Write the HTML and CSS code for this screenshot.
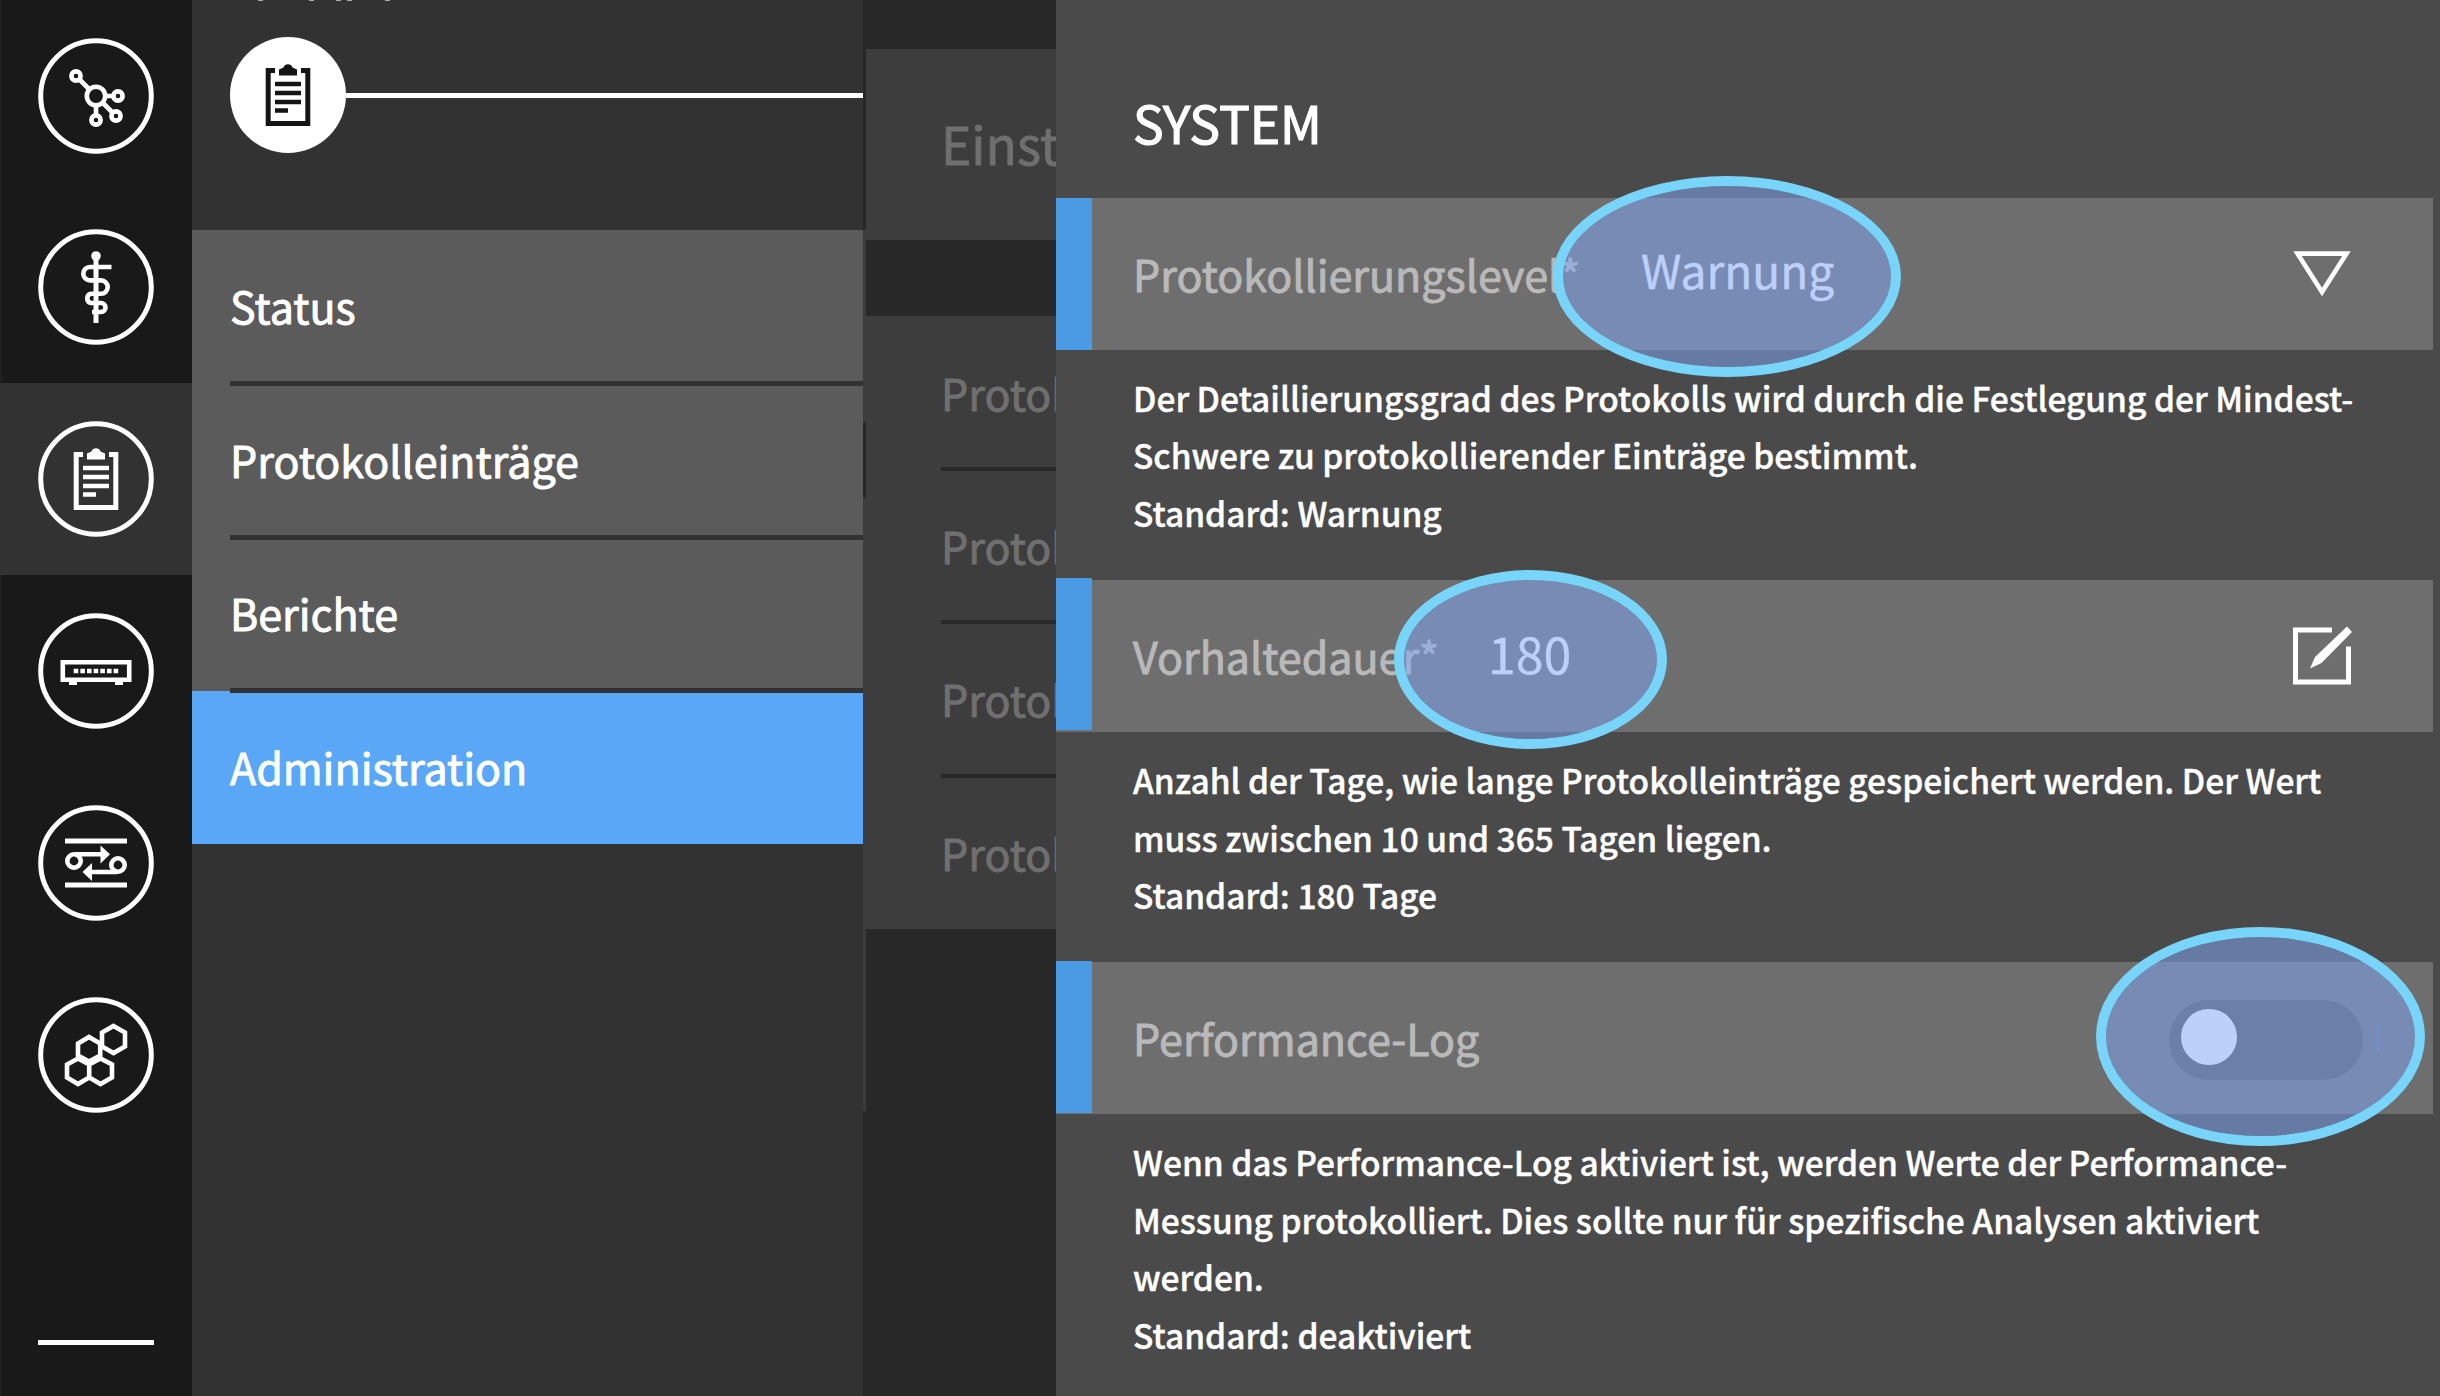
FILE: index.html
```
<!DOCTYPE html>
<html lang="de">
<head>
<meta charset="utf-8">
<title>Protokoll – Administration</title>
<link rel="stylesheet" href="styles.css">
</head>
<body>
<div class="app">
  <nav class="rail">
    <a class="rail-item">
      <svg viewBox="0 0 116 116"><circle class="ring" cx="58" cy="58" r="55.3"/>
        <g class="line"><circle cx="58" cy="58" r="9.2"/><circle cx="38" cy="38" r="4.6"/><circle cx="80" cy="58" r="4.6"/><circle cx="78" cy="78" r="4.6"/><circle cx="58" cy="82" r="4.6"/><path d="M41.5 41.5 51.5 51.5M67 58H75M64.5 64.5 74.5 74.5M58 67V77"/></g></svg>
    </a>
    <a class="rail-item">
      <svg viewBox="0 0 116 116"><circle class="ring" cx="58" cy="58" r="55.3"/>
        <circle cx="58" cy="27" r="4.8" fill="#fff"/><g class="line"><path d="M58 28V94" stroke-width="5"/><path d="M73.500 38H52a6.700 6.700 0 0 0 0 13.400H63a6.700 6.700 0 0 1 0 13.400H53a4.700 4.700 0 0 0 0 9.200H63a4.400 4.400 0 0 1 0 9H54"/></g></svg>
    </a>
    <a class="rail-item rail-item--active">
      <svg viewBox="0 0 116 116"><circle class="ring" cx="58" cy="58" r="55.3"/>
        <g class="clip"><path fill="none" stroke-width="5" d="M45 33.500H38.200V86.500H77.800V33.500H71"/><path fill="none" stroke-width="4.600" d="M45 47H71M45 56H71M45 65H71M45 73.500H58"/><path stroke="none" d="M49 38.500V32.500L53.500 30.500a4.800 4.800 0 0 1 9 0L67 32.500V38.500Z"/></g></svg>
    </a>
    <a class="rail-item">
      <svg viewBox="0 0 116 116"><circle class="ring" cx="58" cy="58" r="55.3"/>
        <path class="line" stroke-width="5" d="M24.800 49.300H91.200V66.700H24.800Z"/><path fill="#fff" d="M31 68h8v4h-8zM77 68h8v4h-8z"/><path class="line" stroke-width="4.600" stroke-dasharray="4.600 2.050" d="M35.700 58H81"/></svg>
    </a>
    <a class="rail-item">
      <svg viewBox="0 0 116 116"><circle class="ring" cx="58" cy="58" r="55.3"/>
        <g class="line"><path d="M27 36H89M27 80H89" stroke-width="5"/><circle cx="36" cy="56" r="6.700"/><circle cx="80" cy="60" r="6.700"/><path d="M37 49.300H66M79 67H51"/></g><path fill="#fff" d="M62.500 40.500 72 49.300 62.500 58.500ZM54 58 44.500 67 54 76Z"/></svg>
    </a>
    <a class="rail-item">
      <svg viewBox="0 0 116 116"><circle class="ring" cx="58" cy="58" r="55.3"/>
        <g class="line"><path d="M75.500 29 87 35.500V49.500L75.500 56 64 49.500V35.500ZM51 40 62.200 46.500V58.500L51 64.500 40 58.500V46.500ZM40 61.500 51.200 67.500V80.500L40 87 29 80.500V67.500ZM62.500 61.500 74 67.500V80.500L62.500 87 51.200 80.500V67.500Z"/></g></svg>
    </a>
    <span class="rail-rule"></span>
  </nav>

  <aside class="menu">
    <header class="menu-head">
      <svg class="menu-edge" viewBox="0 0 671 1"><path fill="#aaa" d="M66 0h5v1h-5zM117 0h5v1h-5zM144 0h5v1h-5zM155 0h5v1h-5zM193 0h5v1h-5z"/></svg>
      <div class="crumb">
        <svg viewBox="0 0 116 116"><circle cx="58" cy="58" r="58" fill="#fff"/>
          <g class="clip clip--dark"><path fill="none" stroke-width="5" d="M45 33.500H38.200V86.500H77.800V33.500H71"/><path fill="none" stroke-width="4.600" d="M45 47H71M45 56H71M45 65H71M45 73.500H58"/><path stroke="none" d="M49 38.500V32.500L53.500 30.500a4.800 4.800 0 0 1 9 0L67 32.500V38.500Z"/></g></svg>
        <span class="crumb-line"></span>
      </div>
    </header>
    <ul class="menu-list">
      <li>Status</li>
      <li>Protokolleinträge</li>
      <li>Berichte</li>
      <li class="selected">Administration</li>
    </ul>
  </aside>

  <div class="gutter"><span class="gutter-gap"></span><span class="gutter-bar"></span><span class="gutter-thumb"></span><span class="gutter-rest"></span></div>

  <section class="back">
    <h2>Einstellungen</h2>
    <ul>
      <li>Protokollierung</li>
      <li>Protokollexport</li>
      <li>Protokollfilter</li>
      <li>Protokollserver</li>
    </ul>
  </section>

  <main class="drawer">
    <h1>SYSTEM</h1>
    <section class="setting setting--level">
      <div class="row">
        <span class="label">Protokollierungslevel*</span><span class="value value--level">Warnung</span>
        <svg class="row-icon" viewBox="0 0 60 60"><path fill="none" stroke="#fff" stroke-width="4.600" d="M5.500 9.600H54.500L30 48Z"/></svg>
        <span class="mark mark--level"></span>
      </div>
      <p>Der Detaillierungsgrad des Protokolls wird durch die Festlegung der Mindest-<br>Schwere zu protokollierender Einträge bestimmt.<br>Standard: Warnung</p>
    </section>
    <section class="setting setting--days">
      <div class="row">
        <span class="label">Vorhaltedauer*</span><span class="value value--days">180</span>
        <svg class="row-icon" viewBox="0 0 60 60"><path fill="none" stroke="#fff" stroke-width="5" d="M40 4H3.500V56H56.500V20.500"/><path fill="#fff" d="M55 .5 60 6 29.500 37 18 42.500 23 31Z"/></svg>
        <span class="mark mark--days"></span>
      </div>
      <p>Anzahl der Tage, wie lange Protokolleinträge gespeichert werden. Der Wert<br>muss zwischen 10 und 365 Tagen liegen.<br>Standard: 180 Tage</p>
    </section>
    <section class="setting setting--perf">
      <div class="row">
        <span class="label">Performance-Log</span>
        <span class="toggle"><i></i></span><span class="tick"></span>
        <span class="mark mark--perf"></span>
      </div>
      <p>Wenn das Performance-Log aktiviert ist, werden Werte der Performance-<br>Messung protokolliert. Dies sollte nur für spezifische Analysen aktiviert<br>werden.<br>Standard: deaktiviert</p>
    </section>
  </main>
</div>
</body>
</html>
```
FILE: styles.css
```
* { box-sizing: border-box; margin: 0; padding: 0; }
body {
  width: 2440px; height: 1396px; overflow: hidden; background: #282828; color: #fff;
  font-family: "Noto Sans CJK JP", "Noto Sans CJK SC", "Noto Sans", sans-serif;
  font-size: 43px; font-weight: 400;
}
ul { list-style: none; }
svg { display: block; flex: none; }
.app { display: flex; height: 1396px; }

.rail { width: 192px; flex: none; display: flex; flex-direction: column; background: #191919; border-left: 2px solid #202020; }
.rail-item { height: 192px; display: flex; align-items: center; padding-left: 36px; }
.rail-item:first-child { height: 191px; }
.rail-item--active { background: #323232; margin-left: -2px; padding-left: 38px; }
.rail-item svg, .crumb svg { width: 116px; height: 116px; }
.ring { fill: none; stroke: #fff; stroke-width: 5; }
.line { fill: none; stroke: #fff; stroke-width: 4.6; }
.clip { fill: #fff; stroke: #fff; }
.clip--dark { fill: #151515; stroke: #151515; }
.rail-rule { width: 116px; height: 5px; margin: 189px 0 0 36px; background: #fff; }

.menu { width: 671px; flex: none; background: #323232; }
.menu-head { height: 230px; }
.menu-edge { width: 671px; height: 1px; margin-bottom: 36px; }
.crumb { display: flex; align-items: center; padding-left: 38px; }
.crumb-line { flex: 1; height: 5px; background: #fff; }
.menu-list { background: #5b5b5b; -webkit-text-stroke: .9px currentColor; }
.menu-list li { height: 153.500px; padding-left: 38px; line-height: 150px; position: relative; }
.menu-list li:not(.selected)::after { content: ""; position: absolute; z-index: 1; left: 38px; right: 0; bottom: -2.500px; height: 5px; background: #323232; }
.menu-list .selected { background: #5aa7f7; }

.gutter { width: 3px; flex: none; display: flex; flex-direction: column; background: #282828; }
.gutter-gap { height: 230px; }
.gutter-bar { height: 192px; background: #3c3c3c; }
.gutter-thumb { height: 76px; background: #282828; }
.gutter-rest { height: 613px; background: #3c3c3c; }

.back { width: 190px; flex: none; padding-top: 49px; overflow: hidden; background: #282828; color: #6f6f6f; white-space: nowrap; -webkit-text-stroke: .9px currentColor; }
.back h2 { height: 191px; padding-left: 75px; line-height: 187px; font-size: 51.500px; font-weight: 400; background: #3d3d3d; }
.back ul { margin-top: 76px; background: #3d3d3d; }
.back li { position: relative; height: 153.200px; margin-left: 75px; line-height: 153px; }
.back li:not(:last-child)::after { content: ""; position: absolute; left: 0; right: 0; bottom: -2px; height: 4px; background: #282828; }

.drawer { flex: 1; background: #4a4a4a; }
h1 { height: 197.500px; padding: 83px 0 0 77px; font-size: 51.500px; line-height: 77px; font-weight: 400; -webkit-text-stroke: 1.200px currentColor; }
.setting { height: 382.200px; }
.row { position: relative; width: 1377px; height: 152.500px; display: flex; align-items: center; padding: 0 81px 0 77px; background: #6e6e6e; }
.row::before { content: ""; position: absolute; left: 0; top: 0; width: 36px; height: 100%; background: #4a9be4; }
.setting--days .row::before { top: -2px; }
.setting--perf .row::before { top: -1px; }
.label { margin-top: -2px; color: #b9b9b9; -webkit-text-stroke: .9px currentColor; }
.value { position: absolute; line-height: 70px; }
.value--level { left: 585px; top: 36px; font-size: 46px; -webkit-text-stroke: .4px currentColor; }
.value--days { left: 432px; top: 37.500px; font-size: 50px; -webkit-text-stroke: .3px currentColor; }
.row-icon { width: 60px; height: 60px; margin-left: auto; }
.toggle { width: 194px; height: 80px; margin-left: auto; margin-right: 14px; margin-top: 3px; border-radius: 40px; background: #545454; padding: 9.500px 12px; }
.toggle i { display: block; width: 55.500px; height: 55.500px; border-radius: 50%; background: #fff; }
.tick { width: 2px; height: 27px; background: #5a80b0; margin-right: -27px; }
.mark { position: absolute; z-index: 2; border: 10px solid #78d4f9; border-radius: 50%; background: rgba(129, 167, 246, .53); background-clip: padding-box; }
.mark--level { left: 497px; top: -22px; width: 348px; height: 201px; }
.mark--days { left: 338px; top: -10px; width: 273px; height: 179px; }
.mark--perf { left: 1040px; top: -35px; width: 329px; height: 219px; }
p { padding: 19px 0 0 77px; font-size: 33.500px; line-height: 57.400px; font-weight: 500; white-space: nowrap; -webkit-text-stroke: .4px currentColor; }
```
